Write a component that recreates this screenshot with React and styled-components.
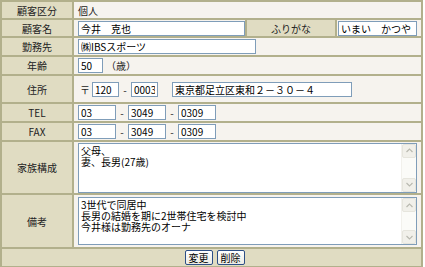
import React from 'react'
import styled, { createGlobalStyle } from 'styled-components'

const GlobalStyle = createGlobalStyle`
    html, body {
        margin: 0;
        padding: 0;
        background: #ffffff;
    }
    body {
        font-family: "Noto Sans CJK JP", "DejaVu Sans", sans-serif;
        font-size: 10px;
        color: #222;
    }
`;

function Chevron({ down }) {
    return (
        <svg width="7" height="5" viewBox="0 0 7 5">
            <path d={down ? 'M0.5 1 L3.5 4 L6.5 1' : 'M0.5 4 L3.5 1 L6.5 4'} fill="none" stroke="#b9b9b0" strokeWidth="1.2" />
        </svg>
    )
}

function Memo({ height, text }) {
    return (
        <MemoBox $h={height}>
            <MemoText defaultValue={text} />
            <ScrollBar>
                <ArrowBtn><Chevron /></ArrowBtn>
                <ArrowBtn><Chevron down /></ArrowBtn>
            </ScrollBar>
        </MemoBox>
    )
}

function App() {
    return (
        <>
            <GlobalStyle />
            <FormTable>
                <colgroup>
                    <col style={{ width: 70 }} />
                    <col style={{ width: 171 }} />
                    <col style={{ width: 88 }} />
                    <col style={{ width: 84 }} />
                </colgroup>
                <tbody>
                    <Row $h={16}>
                        <Label>顧客区分</Label>
                        <Value colSpan={3}>個人</Value>
                    </Row>
                    <Row $h={16}>
                        <Label>顧客名</Label>
                        <Value><TextBox $w={167} defaultValue="今井　克也" /></Value>
                        <Label>ふりがな</Label>
                        <Value $pad={1}><TextBox $w={79} defaultValue="いまい　かつや" /></Value>
                    </Row>
                    <Row $h={17}>
                        <Label>勤務先</Label>
                        <Value colSpan={3}><TextBox $w={178} defaultValue="㈱IBSスポーツ" /></Value>
                    </Row>
                    <Row $h={17}>
                        <Label>年齢</Label>
                        <Value colSpan={3}>
                            <Line>
                                <TextBox $w={25} defaultValue="50" />
                                <Unit>（歳）</Unit>
                            </Line>
                        </Value>
                    </Row>
                    <Row $h={26}>
                        <Label>住所</Label>
                        <Value colSpan={3}>
                            <Line>
                                <Mark>〒</Mark>
                                <TextBox $w={27} defaultValue="120" />
                                <Dash>-</Dash>
                                <TextBox $w={27} defaultValue="0003" />
                                <Spacer />
                                <TextBox $w={180} defaultValue="東京都足立区東和２－３０－４" />
                            </Line>
                        </Value>
                    </Row>
                    <Row $h={17}>
                        <Label>TEL</Label>
                        <Value colSpan={3}>
                            <Line>
                                <TextBox $w={38} defaultValue="03" />
                                <Dash>-</Dash>
                                <TextBox $w={38} defaultValue="3049" />
                                <Dash>-</Dash>
                                <TextBox $w={38} defaultValue="0309" />
                            </Line>
                        </Value>
                    </Row>
                    <Row $h={17}>
                        <Label>FAX</Label>
                        <Value colSpan={3}>
                            <Line>
                                <TextBox $w={38} defaultValue="03" />
                                <Dash>-</Dash>
                                <TextBox $w={38} defaultValue="3049" />
                                <Dash>-</Dash>
                                <TextBox $w={38} defaultValue="0309" />
                            </Line>
                        </Value>
                    </Row>
                    <Row $h={51}>
                        <Label>家族構成</Label>
                        <Value colSpan={3}>
                            <Memo height={50} text={'父母、\n妻、長男(27歳)'} />
                        </Value>
                    </Row>
                    <Row $h={52}>
                        <Label>備考</Label>
                        <Value colSpan={3}>
                            <Memo height={48} text={'3世代で同居中\n長男の結婚を期に2世帯住宅を検討中\n今井様は勤務先のオーナ'} />
                        </Value>
                    </Row>
                    <Row $h={17}>
                        <Footer colSpan={4}>
                            <Buttons>
                                <Button>変更</Button>
                                <Button>削除</Button>
                            </Buttons>
                        </Footer>
                    </Row>
                </tbody>
            </FormTable>
        </>
    )
}

export default App

const FormTable = styled.table`
    width: 423px;
    table-layout: fixed;
    border-collapse: separate;
    border-spacing: 2px;
    background: #b2b08c;
`;

const Row = styled.tr`
    height: ${props => props.$h}px;
`;

const Label = styled.td`
    background: #e0dcc2;
    text-align: center;
    padding: 0;
    color: #222;
    white-space: nowrap;
`;

const Value = styled.td`
    background: #f6f3ee;
    padding: 0 0 0 ${props => props.$pad ?? 4}px;
    white-space: nowrap;
    vertical-align: middle;
`;

const Footer = styled.td`
    background: #e0dcc2;
    padding: 0;
`;

const Buttons = styled.div`
    display: flex;
    justify-content: center;
    gap: 4px;
    padding-left: 6px;
`;

const Button = styled.button`
    box-sizing: border-box;
    height: 15px;
    padding: 0 3px;
    font-family: "Noto Sans CJK JP", sans-serif;
    font-size: 10px;
    line-height: 12px;
    color: #000;
    background: linear-gradient(#ffffff, #ecebe4);
    border: 1px solid #2d4f86;
    border-radius: 2px;
`;

const Line = styled.div`
    display: flex;
    align-items: center;
`;

const TextBox = styled.input`
    box-sizing: border-box;
    width: ${props => props.$w}px;
    height: 15px;
    margin: 0;
    padding: 0 2px;
    font-family: "Noto Sans CJK JP", sans-serif;
    font-size: 10px;
    color: #000;
    background: #ffffff;
    border: 1px solid #7f9db9;
    outline: none;
    display: block;
`;

const Unit = styled.span`
    margin-left: 3px;
`;

const Mark = styled.span`
    margin: 0 2px 0 2px;
`;

const Dash = styled.span`
    width: 12px;
    text-align: center;
`;

const Spacer = styled.span`
    width: 14px;
`;

const MemoBox = styled.div`
    box-sizing: border-box;
    display: flex;
    width: 339px;
    height: ${props => props.$h}px;
    background: #ffffff;
    border: 1px solid #7f9db9;
`;

const MemoText = styled.textarea`
    flex: 1;
    min-width: 0;
    margin: 0;
    padding: 1px 2px;
    resize: none;
    font-family: "Noto Sans CJK JP", sans-serif;
    font-size: 10px;
    line-height: 11px;
    color: #000;
    background: #ffffff;
    border: none;
    outline: none;
    overflow: hidden;
`;

const ScrollBar = styled.div`
    width: 14px;
    display: flex;
    flex-direction: column;
    justify-content: space-between;
    background: #fbfbf8;
    border-left: 1px solid #f2f1ec;
`;

const ArrowBtn = styled.div`
    box-sizing: border-box;
    height: 14px;
    display: flex;
    align-items: center;
    justify-content: center;
    background: #f1f0ea;
    border: 1px solid #e6e5dd;
    border-radius: 2px;
`;
